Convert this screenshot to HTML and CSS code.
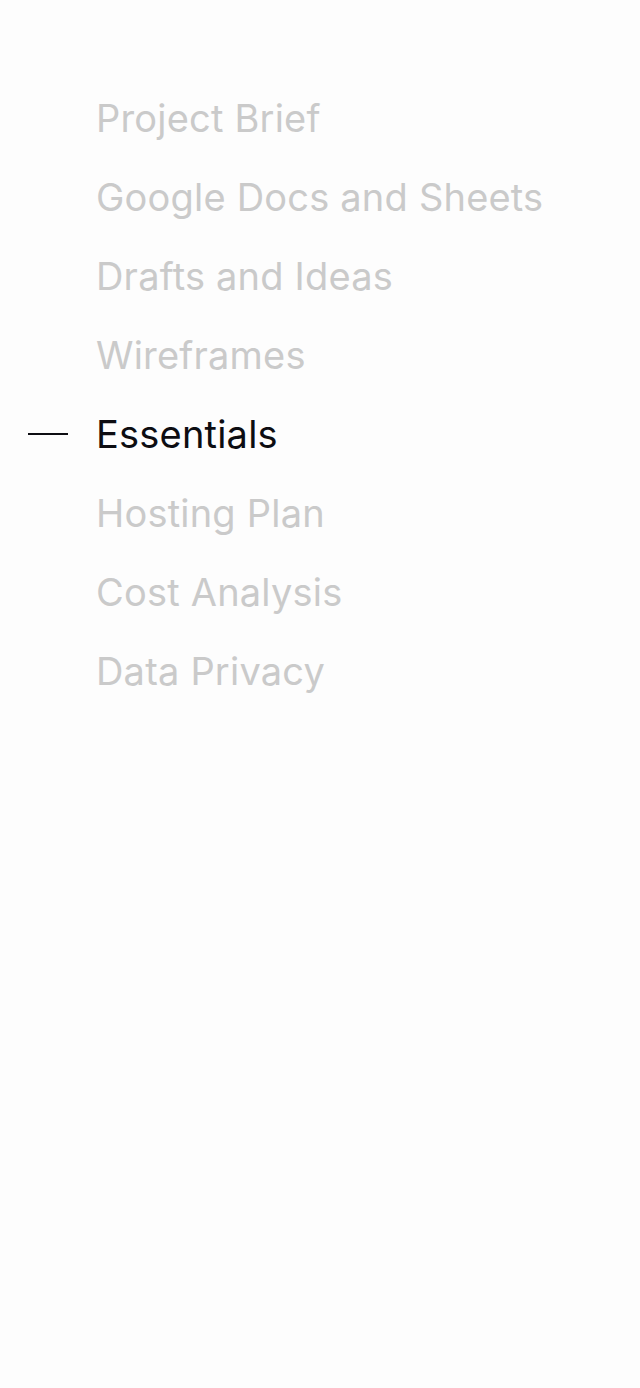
FILE: index.html
```
<!DOCTYPE html>
<html>
<head>
<meta charset="utf-8">
<link rel="stylesheet" href="styles.css">
</head>
<body>
<nav class="toc">
  <ul class="list">
    <li class="item">Project Brief</li>
    <li class="item">Google Docs and Sheets</li>
    <li class="item">Drafts and Ideas</li>
    <li class="item">Wireframes</li>
    <li class="item active"><span class="dash"></span>Essentials</li>
    <li class="item">Hosting Plan</li>
    <li class="item">Cost Analysis</li>
    <li class="item">Data Privacy</li>
  </ul>
</nav>
</body>
</html>
```
FILE: styles.css
```
html, body {
  margin: 0;
  padding: 0;
  background: #fdfdfd;
}
body {
  width: 640px;
  height: 1388px;
  font-family: Inter, "Noto Sans", sans-serif;
}
.toc {
  padding-top: 79px;
}
.list {
  list-style: none;
  margin: 0;
  padding: 0 0 0 96px;
}
.item {
  position: relative;
  font-size: 38px;
  letter-spacing: 0.2px;
  line-height: 79px;
  height: 79px;
  color: #cacaca;
  white-space: nowrap;
}
.item.active {
  color: #0d0d12;
}
.dash {
  position: absolute;
  left: -68px;
  top: 38px;
  width: 40px;
  height: 2px;
  background: #0d0d12;
}
```
